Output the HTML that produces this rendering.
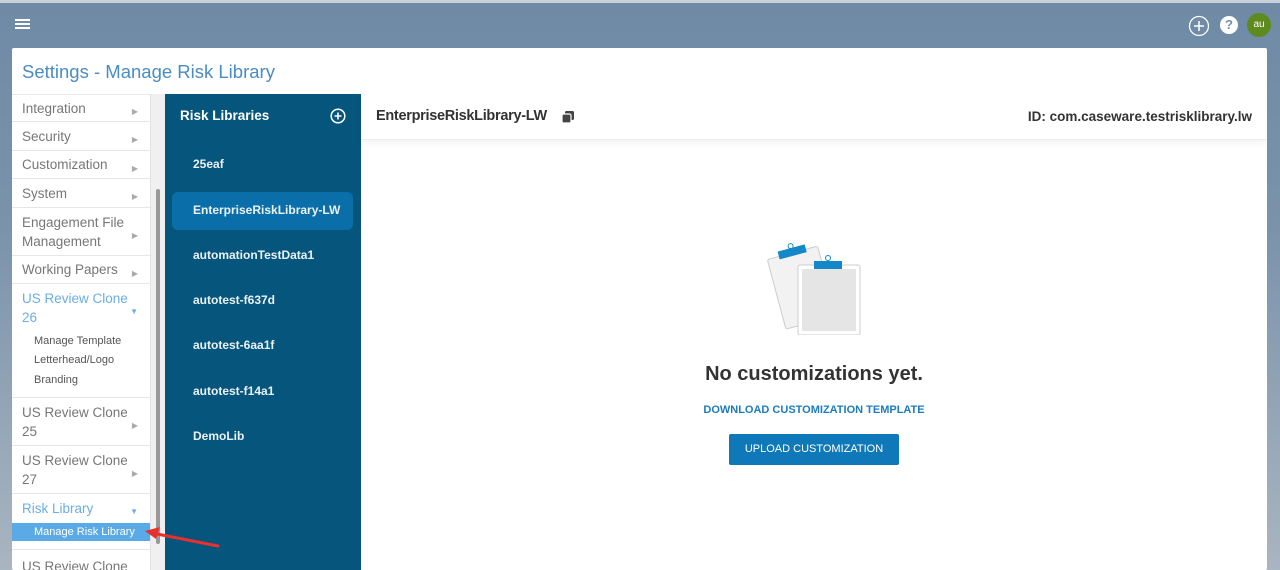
<!DOCTYPE html>
<html><head><style>
*{box-sizing:border-box;margin:0;padding:0}
html,body{width:1280px;height:570px;overflow:hidden}
body{font-family:"Liberation Sans",sans-serif;background:linear-gradient(180deg,#6f8aa6 0%,#7a93ab 40%,#a9b5c0 100%);position:relative}
.top{position:absolute;left:0;top:0;width:1280px;height:3px;background:#c9d2da}
.card{position:absolute;left:12px;top:48px;width:1255px;height:522px;background:#fff;border-radius:2px;overflow:hidden}
.title{position:absolute;left:10px;top:13px;font-size:18.5px;color:#4a8cc4}
.nav{position:absolute;left:0;top:46px;width:138px;height:480px;border-top:1px solid #e8e8e8}
.it{position:absolute;left:0;width:138px;border-bottom:1px solid #e6e6e6;padding:0 10px;font-size:13.5px;color:#777;line-height:19px;display:flex;align-items:center}
.it .ar{position:absolute;right:12px;top:50%;margin-top:-6px;font-size:8px;color:#aaa}
.blue{color:#6aaee6}.blue .ar{color:#6aaee6}
.sub{position:absolute;left:22px;font-size:11px;color:#555}
.sel{position:absolute;left:0;top:428px;width:138px;background:#5aaae8;color:#fff;font-size:11px;padding-left:22px;line-height:18px;height:18px}
.sb{position:absolute;left:138px;top:46px;width:15px;height:480px;background:#f0f0f0;border-left:1px solid #e2e2e2}
.thumb{position:absolute;left:5px;top:95px;width:4px;height:355px;background:#999;border-radius:2px}
.dark{position:absolute;left:153px;top:46px;width:196px;height:480px;background:#06557c;color:#eaf1f6}
.dark h3{position:absolute;left:15px;top:14px;font-size:13.5px;color:#fff}
.lib{position:absolute;left:28px;font-size:12px;font-weight:bold}
.act{position:absolute;left:7px;top:98px;width:181px;height:38px;background:#0a6fa8;border-radius:6px}
.hdr{position:absolute;left:349px;top:46px;width:906px;height:46px;border-bottom:1px solid #eee;box-shadow:0 3px 6px rgba(0,0,0,.05)}
.hdr .n{position:absolute;left:15px;top:14px;font-size:14.5px;font-weight:bold;color:#333;letter-spacing:-0.3px}
.hdr .id{position:absolute;right:15px;top:15px;font-size:13.5px;font-weight:bold;color:#333}
.empty{position:absolute;left:349px;width:906px;text-align:center}
</style></head><body>
<div class="top"></div>
<div style="position:absolute;left:15px;top:19px;width:15px;height:2px;background:#fff;box-shadow:0 4px 0 #fff,0 8px 0 #fff"></div>
<svg style="position:absolute;left:1188px;top:15px" width="22" height="22"><circle cx="11" cy="11" r="9.5" fill="none" stroke="#fff" stroke-width="1.3"/><path d="M11 6v10M6 11h10" stroke="#fff" stroke-width="1.5"/></svg>
<div style="position:absolute;left:1220px;top:16px;width:18px;height:18px;border-radius:50%;background:#fff;color:#7490aa;font-weight:bold;font-size:13px;text-align:center;line-height:18px">?</div>
<div style="position:absolute;left:1247px;top:13px;width:24px;height:24px;border-radius:50%;background:#5f8a1e;color:#fff;font-size:10px;text-align:center;line-height:24px">au</div>
<div class="card">
<div class="title">Settings - Manage Risk Library</div>
<div class="nav">
<div class="it" style="top:0;height:27px">Integration<span class="ar">▶</span></div>
<div class="it" style="top:27px;height:29px">Security<span class="ar">▶</span></div>
<div class="it" style="top:56px;height:28px">Customization<span class="ar">▶</span></div>
<div class="it" style="top:84px;height:29px">System<span class="ar">▶</span></div>
<div class="it" style="top:113px;height:48px">Engagement File<br>Management<span class="ar">▶</span></div>
<div class="it" style="top:161px;height:28px">Working Papers<span class="ar">▶</span></div>
<div class="it blue" style="top:189px;height:48px;border:none">US Review Clone<br>26<span class="ar">▼</span></div>
<div class="sub" style="top:240px">Manage Template</div>
<div class="sub" style="top:259px">Letterhead/Logo</div>
<div class="sub" style="top:279px">Branding</div>
<div class="it" style="top:256px;height:47px;border:none;border-bottom:1px solid #e6e6e6;visibility:visible;background:transparent"></div>
<div class="it" style="top:303px;height:48px">US Review Clone<br>25<span class="ar">▶</span></div>
<div class="it" style="top:351px;height:48px">US Review Clone<br>27<span class="ar">▶</span></div>
<div class="it blue" style="top:399px;height:28px;border:none">Risk Library<span class="ar">▼</span></div>
<div class="sel">Manage Risk Library</div>
<div class="it" style="top:454px;height:30px;border-top:1px solid #e6e6e6;align-items:flex-start;padding-top:7px">US Review Clone</div>
</div>
<div class="sb"><div class="thumb"></div></div>
<div class="dark">
<h3>Risk Libraries</h3>
<svg style="position:absolute;left:165px;top:14px" width="16" height="16"><circle cx="8" cy="8" r="6.8" fill="none" stroke="#fff" stroke-width="1.5"/><path d="M8 4.5v7M4.5 8h7" stroke="#fff" stroke-width="1.6"/></svg>
<div class="act"></div>
<div class="lib" style="top:63px">25eaf</div>
<div class="lib" style="top:109px">EnterpriseRiskLibrary-LW</div>
<div class="lib" style="top:154px">automationTestData1</div>
<div class="lib" style="top:199px">autotest-f637d</div>
<div class="lib" style="top:244px">autotest-6aa1f</div>
<div class="lib" style="top:290px">autotest-f14a1</div>
<div class="lib" style="top:335px">DemoLib</div>
</div>
<div class="hdr"><span class="n">EnterpriseRiskLibrary-LW</span>
<svg style="position:absolute;left:200px;top:16px" width="14" height="14"><rect x="4" y="1" width="9" height="9" rx="1.5" fill="#444"/><rect x="1" y="4" width="9" height="9" rx="1.5" fill="#444" stroke="#fff" stroke-width="1.2"/></svg>
<span class="id">ID: com.caseware.testrisklibrary.lw</span></div>
<svg style="position:absolute;left:753px;top:192px" width="100" height="95">
<g transform="rotate(-15 35 45)"><rect x="10" y="12" width="52" height="72" rx="2" fill="#f2f2f2" stroke="#ccc"/><rect x="22" y="7" width="28" height="8" fill="#1288c8"/><circle cx="36" cy="5" r="2.5" fill="none" stroke="#1288c8"/></g>
<rect x="33" y="25" width="62" height="70" rx="2" fill="#fff" stroke="#ccc"/><rect x="37" y="29" width="54" height="62" fill="#e5e5e5"/>
<rect x="49" y="21" width="28" height="8" fill="#1288c8"/><circle cx="63" cy="18" r="2.5" fill="none" stroke="#1288c8"/>
</svg>
<div class="empty" style="top:315px;font-size:20px;font-weight:bold;color:#333">No customizations yet.</div>
<div class="empty" style="top:356px;font-size:11px;font-weight:bold;color:#1b7cc0">DOWNLOAD CUSTOMIZATION TEMPLATE</div>
<div style="position:absolute;left:717px;top:386px;width:170px;height:31px;background:#0e78b8;border-radius:2px;color:#fff;font-size:11px;text-align:center;line-height:31px">UPLOAD CUSTOMIZATION</div>
</div>
<svg style="position:absolute;left:140px;top:522px" width="85" height="30"><path d="M78 24L12 11" stroke="#e8302f" stroke-width="3" stroke-linecap="round"/><path d="M5 9l15-4-4 12z" fill="#e8302f"/></svg>
</body></html>
